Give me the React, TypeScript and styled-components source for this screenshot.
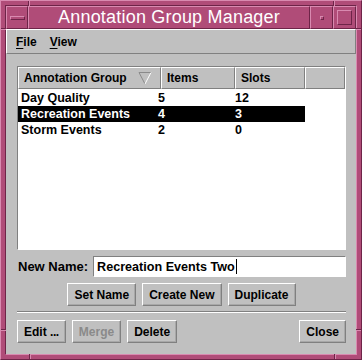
import React from "react";
import styled, { createGlobalStyle } from "styled-components";

// ── Palette ──────────────────────────────────────────────────────

const PINK = "#b04c78";
const PINK_LIGHT = "#d98ab0";
const PINK_DARK = "#6e2448";
const GRAY = "#c0c0c0";
const GRAY_DARK = "#808080";

const GlobalStyle = createGlobalStyle`
  body {
    margin: 0;
    background: ${GRAY};
  }
`;

// ── Window frame ─────────────────────────────────────────────────

const Frame = styled.div`
  position: relative;
  width: 362px;
  height: 360px;
  box-sizing: border-box;
  display: flex;
  padding: 4px;
  background: ${PINK};
  border: 1px solid;
  border-color: ${PINK_LIGHT} ${PINK_DARK} ${PINK_DARK} ${PINK_LIGHT};
  font-family: "Liberation Sans", Arial, sans-serif;
`;

const FrameInner = styled.div`
  flex: 1;
  display: flex;
  flex-direction: column;
  border: 1px solid;
  border-color: ${PINK_DARK} ${PINK_LIGHT} ${PINK_LIGHT} ${PINK_DARK};
`;

const Tick = styled.span<{ $side: "top" | "bottom" | "left" | "right"; $at: number }>`
  position: absolute;
  ${({ $side, $at }) =>
    $side === "top" || $side === "bottom"
      ? `left: ${$at - 1}px; width: 0; height: 5px; ${$side}: 0;
         border-left: 1px solid ${PINK_DARK}; border-right: 1px solid ${PINK_LIGHT};`
      : `top: ${$at - 1}px; height: 0; width: 5px; ${$side}: 0;
         border-top: 1px solid ${PINK_DARK}; border-bottom: 1px solid ${PINK_LIGHT};`}
`;

const TitleBar = styled.div`
  display: flex;
  height: 23px;
  background: ${PINK};
`;

const TitleButton = styled.div<{ $w?: number }>`
  width: ${({ $w }) => $w ?? 22}px;
  box-sizing: border-box;
  display: flex;
  align-items: center;
  justify-content: center;
  border: 1px solid;
  border-color: ${PINK_LIGHT} ${PINK_DARK} ${PINK_DARK} ${PINK_LIGHT};
`;

const TitleLabel = styled.div`
  flex: 1;
  display: flex;
  align-items: center;
  justify-content: center;
  box-sizing: border-box;
  border: 1px solid;
  border-color: ${PINK_LIGHT} ${PINK_DARK} ${PINK_DARK} ${PINK_LIGHT};
  color: #ffffff;
  font-size: 18px;
  letter-spacing: 0.2px;
`;

const Glyph = styled.span<{ $w: number; $h: number }>`
  width: ${({ $w }) => $w}px;
  height: ${({ $h }) => $h}px;
  box-sizing: border-box;
  border: 1px solid;
  border-color: ${PINK_LIGHT} ${PINK_DARK} ${PINK_DARK} ${PINK_LIGHT};
`;

// ── Client area ──────────────────────────────────────────────────

const Client = styled.div`
  flex: 1;
  display: flex;
  flex-direction: column;
  background: ${GRAY};
  font-size: 12px;
  font-weight: bold;
  color: #000;
`;

const MenuBar = styled.div`
  height: 25px;
  box-sizing: border-box;
  display: flex;
  align-items: center;
  gap: 13px;
  padding-left: 9px;
  border: 1px solid;
  border-color: #ffffff ${GRAY_DARK} ${GRAY_DARK} #ffffff;
`;

const MenuItem = styled.span`
  font-size: 12px;
  u {
    text-decoration-thickness: 1px;
    text-underline-offset: 2px;
  }
`;

const Body = styled.div`
  flex: 1;
  display: flex;
  flex-direction: column;
  padding: 12px 10px 11px 11px;
`;

// ── Table ────────────────────────────────────────────────────────

const Table = styled.div`
  flex: 1;
  display: flex;
  flex-direction: column;
  border: 1px solid;
  border-color: ${GRAY_DARK} #ffffff #ffffff ${GRAY_DARK};
  background: #ffffff;
`;

const HeaderRow = styled.div`
  display: flex;
  height: 22px;
  background: ${GRAY};
`;

const HeaderCell = styled.div<{ $w?: number }>`
  ${({ $w }) => ($w ? `width: ${$w}px;` : "flex: 1;")}
  box-sizing: border-box;
  display: flex;
  align-items: center;
  justify-content: space-between;
  padding: 0 8px 0 5px;
  border: 1px solid;
  border-color: #ffffff ${GRAY_DARK} ${GRAY_DARK} #ffffff;
`;

const Rows = styled.div`
  flex: 1;
  padding-top: 1px;
`;

const Row = styled.div<{ $selected?: boolean }>`
  display: grid;
  grid-template-columns: 140px 77px 70px;
  width: 287px;
  height: 16px;
  line-height: 16px;
  font-size: 12.5px;
  background: ${({ $selected }) => ($selected ? "#000" : "transparent")};
  color: ${({ $selected }) => ($selected ? "#fff" : "#000")};

  span:first-child {
    padding-left: 3px;
  }
`;

// ── Form ─────────────────────────────────────────────────────────

const NameRow = styled.div`
  display: flex;
  align-items: center;
  margin-top: 6px;
  padding-left: 1px;
  font-size: 13px;
`;

const NameInput = styled.div`
  flex: 1;
  height: 21px;
  box-sizing: border-box;
  margin-left: 5px;
  padding-left: 3px;
  display: flex;
  align-items: center;
  font-size: 12.6px;
  background: #fff;
  border: 1px solid;
  border-color: ${GRAY_DARK} #ffffff #ffffff ${GRAY_DARK};
`;

const Caret = styled.span`
  width: 1px;
  height: 15px;
  margin-left: 1px;
  background: #000;
`;

const ButtonRow = styled.div<{ $center?: boolean }>`
  display: flex;
  gap: 6px;
  justify-content: ${({ $center }) => ($center ? "center" : "flex-start")};
  margin-top: ${({ $center }) => ($center ? 6 : 7)}px;
`;

const Button = styled.button<{ $disabled?: boolean; $push?: boolean }>`
  height: 23px;
  padding: 0 6px;
  margin-left: ${({ $push }) => ($push ? "auto" : "0")};
  font-family: "Liberation Sans", Arial, sans-serif;
  font-size: 12px;
  font-weight: bold;
  color: ${({ $disabled }) => ($disabled ? "#8a8a8a" : "#000")};
  background: ${GRAY};
  border: 1px solid;
  border-color: #ffffff ${GRAY_DARK} ${GRAY_DARK} #ffffff;
  box-shadow: inset -1px -1px 0 #a8a8a8;
  border-radius: 0;
`;

const Dots = styled.span`
  letter-spacing: -0.4px;
`;

const Separator = styled.div`
  margin-top: 5px;
  height: 0;
  border-top: 1px solid ${GRAY_DARK};
  border-bottom: 1px solid #ffffff;
`;

// ── Data ─────────────────────────────────────────────────────────

const GROUPS = [
  { name: "Day Quality", items: 5, slots: 12 },
  { name: "Recreation Events", items: 4, slots: 3 },
  { name: "Storm Events", items: 2, slots: 0 },
];

function SortArrow() {
  return (
    <svg width="14" height="14" viewBox="0 0 14 14">
      <line x1="1" y1="1.5" x2="13" y2="1.5" stroke="#8a8a8a" />
      <line x1="1" y1="1.5" x2="7" y2="13" stroke="#8a8a8a" />
      <line x1="13" y1="1.5" x2="7" y2="13" stroke="#ffffff" />
    </svg>
  );
}

export default function App() {
  return (
    <>
      <GlobalStyle />
      <Frame>
        <Tick $side="top" $at={28} />
        <Tick $side="top" $at={333} />
        <Tick $side="bottom" $at={29} />
        <Tick $side="bottom" $at={334} />
        <Tick $side="left" $at={28} />
        <Tick $side="left" $at={329} />
        <Tick $side="right" $at={28} />
        <Tick $side="right" $at={329} />
        <FrameInner>
          <TitleBar>
            <TitleButton>
              <Glyph $w={15} $h={4} />
            </TitleButton>
            <TitleLabel>Annotation Group Manager</TitleLabel>
            <TitleButton $w={23}>
              <Glyph $w={4} $h={4} />
            </TitleButton>
            <TitleButton $w={23}>
              <Glyph $w={15} $h={15} />
            </TitleButton>
          </TitleBar>
          <Client>
            <MenuBar>
              <MenuItem><u>F</u>ile</MenuItem>
              <MenuItem><u>V</u>iew</MenuItem>
            </MenuBar>
            <Body>
              <Table>
                <HeaderRow>
                  <HeaderCell $w={143}>
                    Annotation Group
                    <SortArrow />
                  </HeaderCell>
                  <HeaderCell $w={74}>Items</HeaderCell>
                  <HeaderCell $w={70}>Slots</HeaderCell>
                  <HeaderCell />
                </HeaderRow>
                <Rows>
                  {GROUPS.map((g) => (
                    <Row key={g.name} $selected={g.name === "Recreation Events"}>
                      <span>{g.name}</span>
                      <span>{g.items}</span>
                      <span>{g.slots}</span>
                    </Row>
                  ))}
                </Rows>
              </Table>
              <NameRow>
                New Name:
                <NameInput>
                  Recreation Events Two
                  <Caret />
                </NameInput>
              </NameRow>
              <ButtonRow $center>
                <Button>Set Name</Button>
                <Button>Create New</Button>
                <Button>Duplicate</Button>
              </ButtonRow>
              <Separator />
              <ButtonRow>
                <Button>Edit <Dots>...</Dots></Button>
                <Button $disabled>Merge</Button>
                <Button>Delete</Button>
                <Button $push>Close</Button>
              </ButtonRow>
            </Body>
          </Client>
        </FrameInner>
      </Frame>
    </>
  );
}
